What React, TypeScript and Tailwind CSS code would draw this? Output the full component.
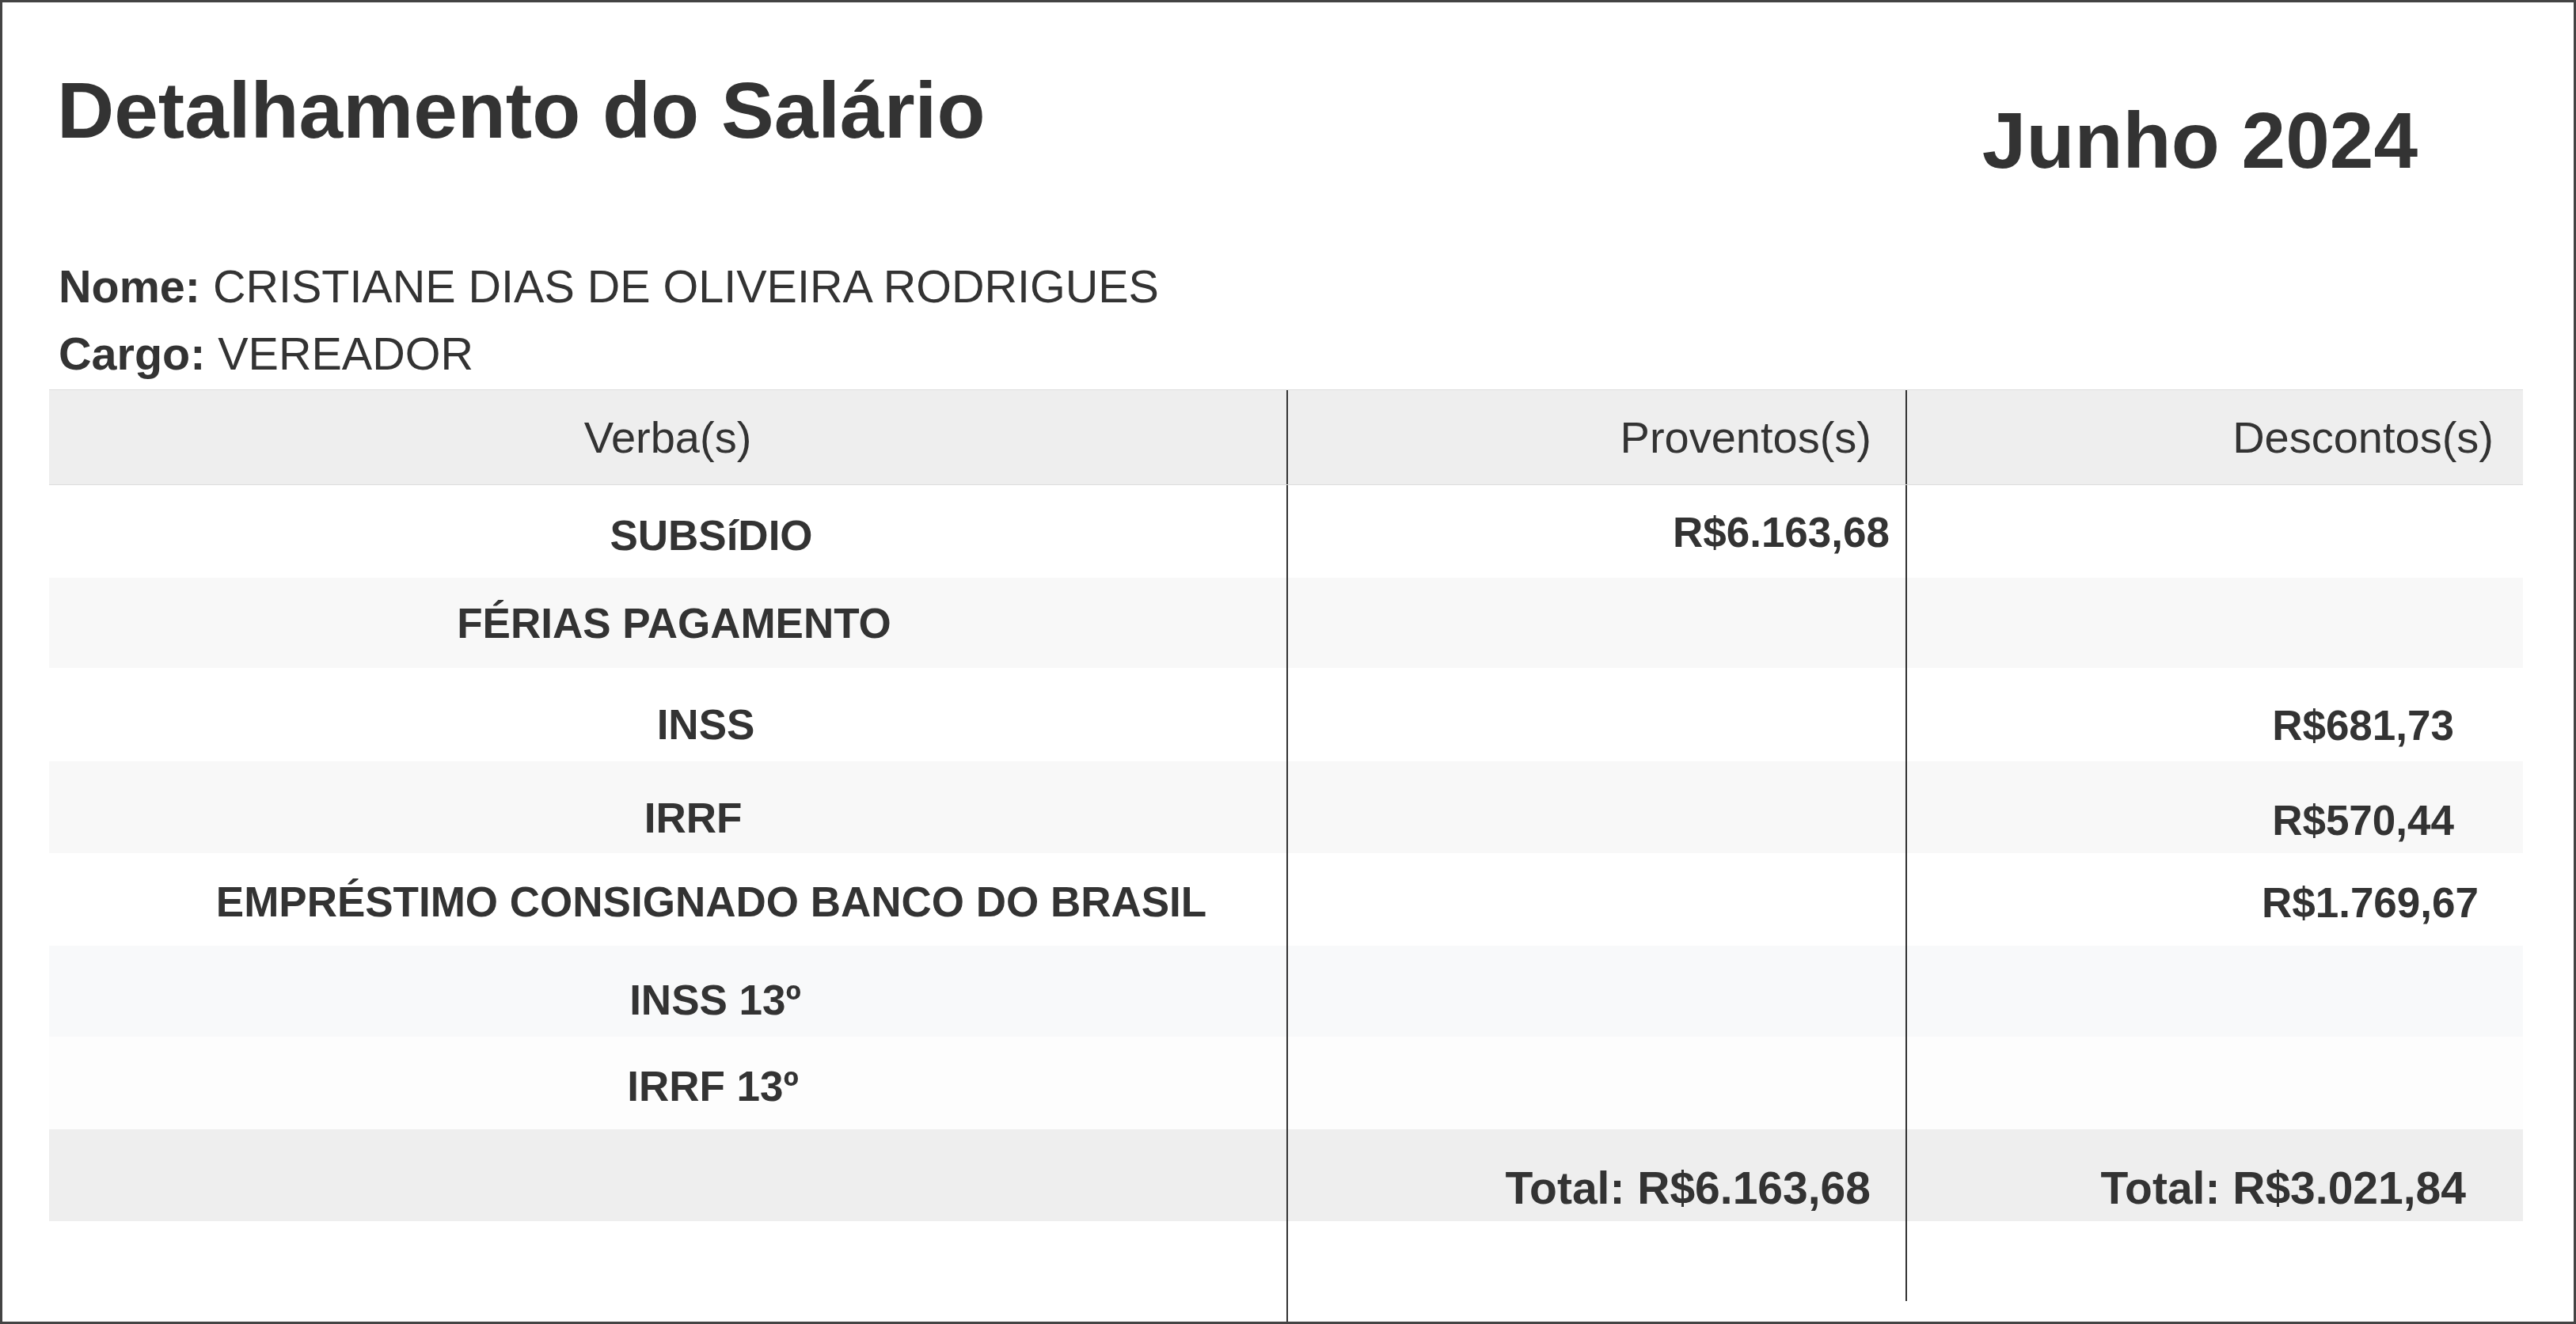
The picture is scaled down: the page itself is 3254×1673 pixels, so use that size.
type Row = {
  label: string;
  prov: string;
  desc: string;
  bg: string;
  h: string;
  labelCls: string;
  provCls: string;
  descCls: string;
};

const rows: Row[] = [
  {
    label: "SUBSíDIO",
    prov: "R$6.163,68",
    desc: "",
    bg: "bg-white",
    h: "h-[117px]",
    labelCls: "pl-[110px] pt-[9px]",
    provCls: "pr-[20px] pt-[2px]",
    descCls: "",
  },
  {
    label: "FÉRIAS PAGAMENTO",
    prov: "",
    desc: "",
    bg: "bg-[#f8f8f8]",
    h: "h-[114px]",
    labelCls: "pl-[16px]",
    provCls: "",
    descCls: "",
  },
  {
    label: "INSS",
    prov: "",
    desc: "R$681,73",
    bg: "bg-white",
    h: "h-[118px]",
    labelCls: "pl-[96px] pt-[24px]",
    provCls: "",
    descCls: "pr-[87px] pt-[27px]",
  },
  {
    label: "IRRF",
    prov: "",
    desc: "R$570,44",
    bg: "bg-[#f8f8f8]",
    h: "h-[116px]",
    labelCls: "pl-[64px] pt-[26px]",
    provCls: "",
    descCls: "pr-[87px] pt-[32px]",
  },
  {
    label: "EMPRÉSTIMO CONSIGNADO BANCO DO BRASIL",
    prov: "",
    desc: "R$1.769,67",
    bg: "bg-white",
    h: "h-[117px]",
    labelCls: "pl-[110px] pt-[6px]",
    provCls: "",
    descCls: "pr-[56px] pt-[8px]",
  },
  {
    label: "INSS 13º",
    prov: "",
    desc: "",
    bg: "bg-[#f8f9fa]",
    h: "h-[115px]",
    labelCls: "pl-[120px] pt-[22px]",
    provCls: "",
    descCls: "",
  },
  {
    label: "IRRF 13º",
    prov: "",
    desc: "",
    bg: "bg-[#fdfdfd]",
    h: "h-[117px]",
    labelCls: "pl-[114px] pt-[7px]",
    provCls: "",
    descCls: "",
  },
];

const cols = "grid grid-cols-[1565px_782px_778px]";

export default function App() {
  return (
    <div className="w-[3254px] h-[1673px] border-[3px] border-[#444] bg-white text-[#333] font-['Liberation_Sans',Arial,sans-serif] overflow-hidden">
      {/* cabeçalho */}
      <div className="flex justify-between items-start pt-[86px] pl-[69px] pr-[197px]">
        <h1 className="text-[100px] leading-none font-bold">
          Detalhamento do Salário
        </h1>
        <h2 className="text-[100px] leading-none font-bold mt-[38px]">
          Junho 2024
        </h2>
      </div>

      <div className="pl-[71px] mt-[107px] text-[57.5px] leading-none">
        <p>
          <span className="font-bold">Nome:</span> CRISTIANE DIAS DE OLIVEIRA
          RODRIGUES
        </p>
        <p className="mt-[27px]">
          <span className="font-bold">Cargo:</span> VEREADOR
        </p>
      </div>

      {/* tabela */}
      <div className="ml-[59px] mt-[16px] w-[3125px]">
        <div
          className={`${cols} h-[121px] bg-[#eeeeee] border-y border-[#dddddd] text-[56px] leading-none`}
        >
          <div className="flex items-center justify-center border-r-2 border-r-[#333]">
            Verba(s)
          </div>
          <div className="flex items-center justify-end pr-[43px] border-r-2 border-r-[#333]">
            Proventos(s)
          </div>
          <div className="flex items-center justify-end pr-[37px]">
            Descontos(s)
          </div>
        </div>

        {rows.map((r, i) => (
          <div
            key={i}
            className={`${cols} ${r.h} ${r.bg} text-[53px] leading-none font-bold`}
          >
            <div
              className={`flex items-center justify-center text-center border-r-2 border-r-[#333] ${r.labelCls}`}
            >
              {r.label}
            </div>
            <div
              className={`flex items-center justify-end border-r-2 border-r-[#333] ${r.provCls}`}
            >
              {r.prov}
            </div>
            <div className={`flex items-center justify-end ${r.descCls}`}>
              {r.desc}
            </div>
          </div>
        ))}

        <div
          className={`${cols} h-[116px] bg-[#eeeeee] text-[57px] leading-none font-bold`}
        >
          <div className="border-r-2 border-r-[#333]"></div>
          <div className="flex items-center justify-end pr-[44px] pt-[32px] border-r-2 border-r-[#333]">
            Total: R$6.163,68
          </div>
          <div className="flex items-center justify-end pr-[72px] pt-[32px]">
            Total: R$3.021,84
          </div>
        </div>

        {/* linhas das colunas continuam abaixo da tabela */}
        <div className={`${cols} h-[127px] items-start`}>
          <div className="h-[127px] border-r-2 border-r-[#333]"></div>
          <div className="h-[101px] border-r-2 border-r-[#333]"></div>
          <div></div>
        </div>
      </div>
    </div>
  );
}
